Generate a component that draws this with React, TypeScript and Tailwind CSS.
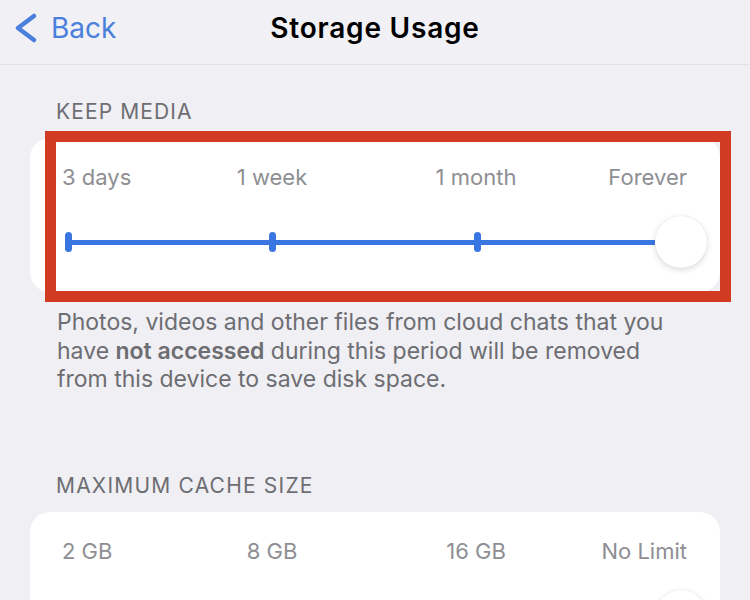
import React from "react";

const font = { fontFamily: "Inter, 'Noto Sans', sans-serif" };

function Slider({ labels }: { labels: string[] }) {
  return (
    <div className="flex flex-col pt-[26px] pb-[24px] pl-[38px]">
      <div className="grid grid-cols-[102px_204px_204px_102px] w-[612px] h-[26px] leading-[26px] text-[22px] text-[#8e8e93]">
        <div className="-ml-[6px] text-left whitespace-nowrap">{labels[0]}</div>
        <div className="text-center whitespace-nowrap">{labels[1]}</div>
        <div className="text-center whitespace-nowrap">{labels[2]}</div>
        <div className="-mr-[7px] text-right whitespace-nowrap">{labels[3]}</div>
      </div>
      <div className="mt-[26px] flex items-center h-[52px] -ml-[3.5px]">
        <div className="w-[7px] h-[20px] rounded-full bg-[#3a76e2]" />
        <div className="w-[197px] h-[5px] bg-[#3a76e2]" />
        <div className="w-[7px] h-[20px] rounded-full bg-[#3a76e2]" />
        <div className="w-[198px] h-[5px] bg-[#3a76e2]" />
        <div className="w-[7px] h-[20px] rounded-full bg-[#3a76e2]" />
        <div className="w-[174px] h-[5px] bg-[#3a76e2]" />
        <div className="w-[52px] h-[52px] rounded-full bg-white shadow-[0_2px_6px_rgba(0,0,0,0.14),0_0_1px_rgba(0,0,0,0.12)] shrink-0" />
      </div>
    </div>
  );
}

export default function App() {
  return (
    <div className="w-[750px] h-[600px] overflow-hidden bg-[#efeff4] flex flex-col" style={font}>
      <div className="h-[65px] shrink-0 flex items-center pb-[8px] relative bg-[#f0f0f5] border-b border-[#e2e2e8]">
        <div className="flex items-center pl-[13px] gap-[12px] text-[#4a7fdb] text-[28px]">
          <svg width="26" height="30" viewBox="0 0 26 30" fill="none">
            <path d="M21 3 L5 15 L21 27" stroke="#4a7fdb" strokeWidth="4.5" strokeLinecap="round" strokeLinejoin="round" />
          </svg>
          <span className="leading-none">Back</span>
        </div>
        <div className="absolute inset-0 pb-[8px] flex items-center justify-center text-[28px] tracking-[0.8px] font-semibold text-black pointer-events-none">
          Storage Usage
        </div>
      </div>

      <div className="mt-[35px] pl-[56px] h-[24px] leading-[24px] text-[21px] tracking-[1.1px] text-[#6d6d72] uppercase">Keep media</div>

      <div className="mt-[14px] mx-[30px] relative">
        <div className="bg-white rounded-[20px]">
          <Slider labels={["3 days", "1 week", "1 month", "Forever"]} />
        </div>
        <div className="absolute left-[15px] -top-[7px] -right-[11px] -bottom-[10px] border-[11px] border-[#d13b23] pointer-events-none" />
      </div>

      <div className="mt-[16px] pl-[57px] text-[23px] leading-[28.5px] text-[#6d6d72] whitespace-nowrap">
        Photos, videos and other files from cloud chats that you<br />
        have <span className="font-semibold">not accessed</span> during this period will be removed<br />
        from this device to save disk space.
      </div>

      <div className="mt-[80px] pl-[56px] h-[24px] leading-[24px] text-[21px] tracking-[1.2px] text-[#6d6d72] uppercase shrink-0">Maximum cache size</div>

      <div className="mt-[14px] mx-[30px] bg-white rounded-[20px] shrink-0">
        <Slider labels={["2 GB", "8 GB", "16 GB", "No Limit"]} />
      </div>
    </div>
  );
}
